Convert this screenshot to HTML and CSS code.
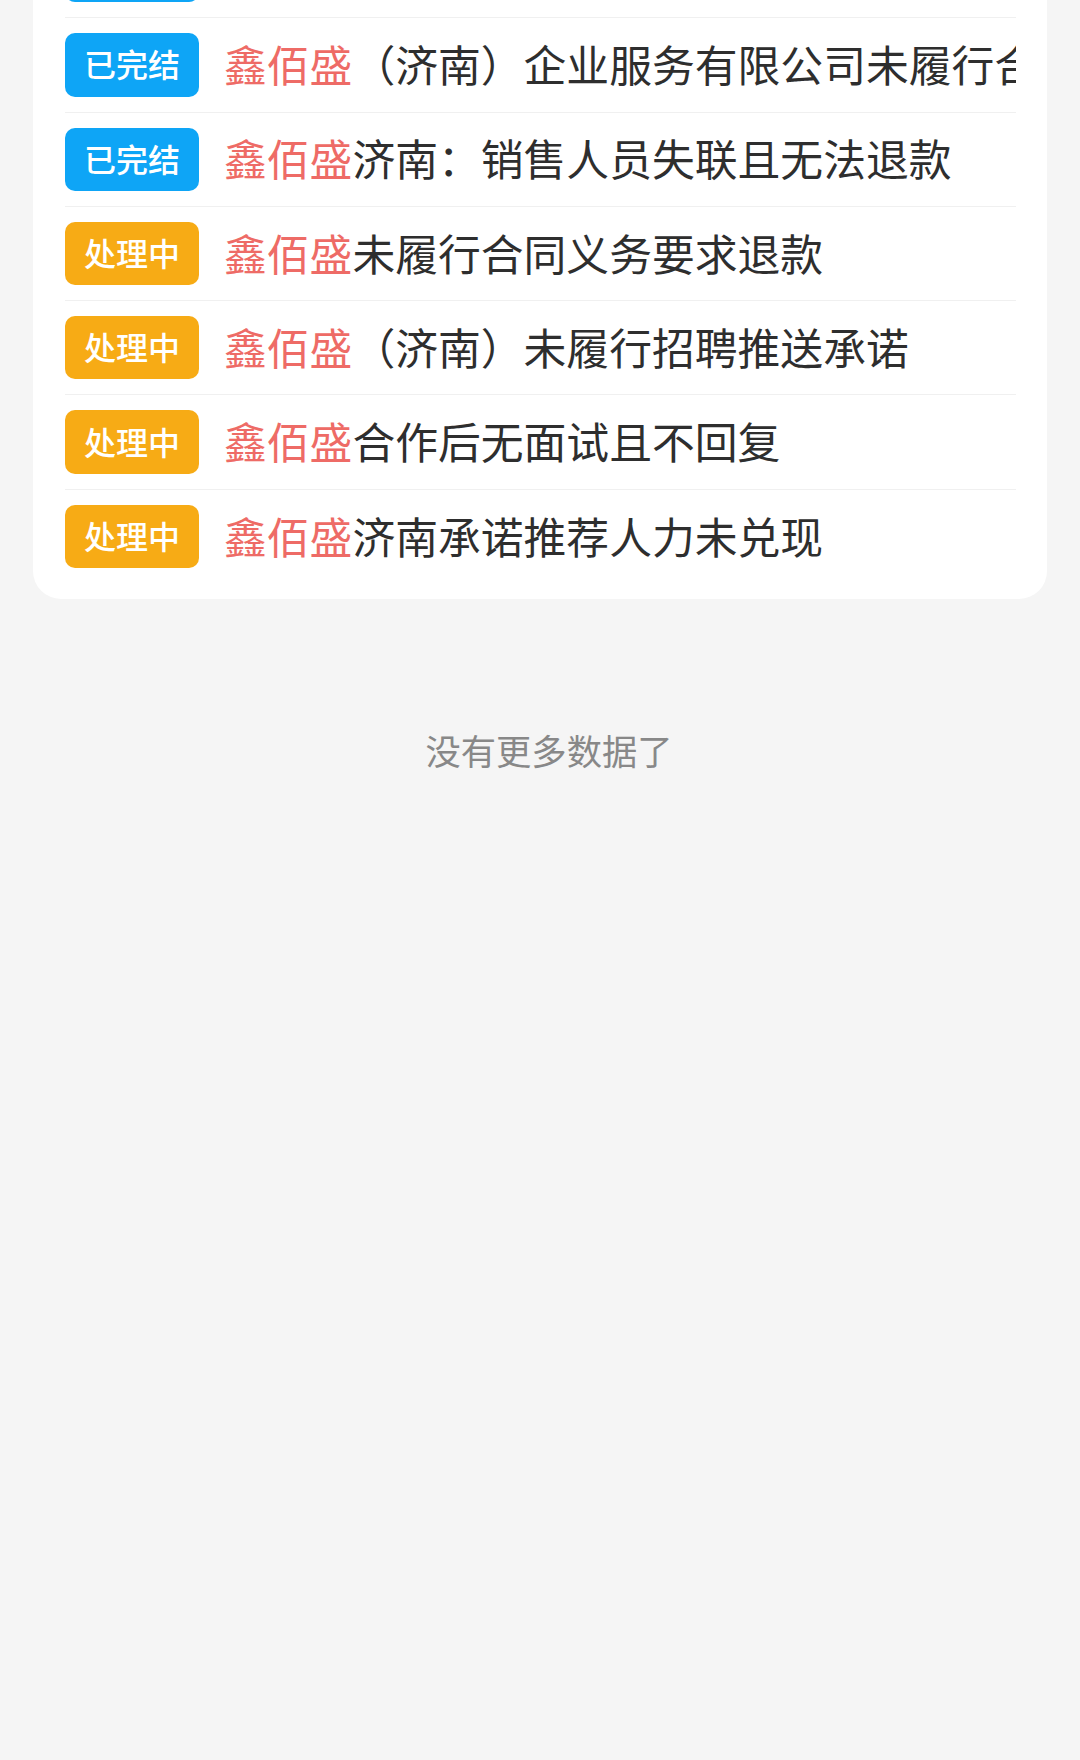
FILE: index.html
```html
<!DOCTYPE html>
<html lang="zh-CN">
<head>
<meta charset="utf-8">
<title>投诉列表</title>
<link rel="stylesheet" href="styles.css">
</head>
<body>
<div class="page">
  <div class="card">
    <div class="row">
      <span class="badge badge-done">已完结</span>
      <span class="title"><span class="brand">鑫佰盛</span>承诺服务未兑现要求退款</span>
    </div>
    <div class="row">
      <span class="badge badge-done">已完结</span>
      <span class="title"><span class="brand">鑫佰盛</span>（济南）企业服务有限公司未履行合同义务</span>
    </div>
    <div class="row">
      <span class="badge badge-done">已完结</span>
      <span class="title"><span class="brand">鑫佰盛</span>济南：销售人员失联且无法退款</span>
    </div>
    <div class="row">
      <span class="badge badge-doing">处理中</span>
      <span class="title"><span class="brand">鑫佰盛</span>未履行合同义务要求退款</span>
    </div>
    <div class="row">
      <span class="badge badge-doing">处理中</span>
      <span class="title"><span class="brand">鑫佰盛</span>（济南）未履行招聘推送承诺</span>
    </div>
    <div class="row">
      <span class="badge badge-doing">处理中</span>
      <span class="title"><span class="brand">鑫佰盛</span>合作后无面试且不回复</span>
    </div>
    <div class="row">
      <span class="badge badge-doing">处理中</span>
      <span class="title"><span class="brand">鑫佰盛</span>济南承诺推荐人力未兑现</span>
    </div>
  </div>
  <div class="no-more">没有更多数据了</div>
</div>
</body>
</html>
```

FILE: styles.css
```css
html, body {
  margin: 0;
  padding: 0;
}

body {
  background: #f5f5f5;
  font-family: "Noto Sans CJK SC", "Noto Sans", sans-serif;
  height: 1760px;
  overflow: hidden;
}

.page {
  padding: 0 33px;
}

.card {
  background: #ffffff;
  border-radius: 28px;
  margin-top: -91px;
  padding: 15px 31px 15.6px 32px;
}

.row {
  display: flex;
  align-items: center;
  gap: 25px;
  padding: 15px 0;
  border-bottom: 1px solid #f0f0f0;
}

.row:last-child {
  border-bottom: none;
}

.badge {
  flex: none;
  box-sizing: border-box;
  width: 134px;
  height: 63.3px;
  padding-bottom: 3px;
  border-radius: 10px;
  color: #ffffff;
  font-size: 32px;
  font-weight: 500;
  display: flex;
  align-items: center;
  justify-content: center;
  line-height: 1;
}

.badge-done {
  background: #0ea5f6;
}

.badge-doing {
  background: #f7ab15;
}

.title {
  flex: 1;
  min-width: 0;
  padding-bottom: 3px;
  font-size: 42.8px;
  line-height: 1;
  color: #2e2e2e;
  white-space: nowrap;
  overflow: hidden;
}

.brand {
  color: #ee6b66;
}

.no-more {
  padding-top: 133px;
  padding-left: 18px;
  text-align: center;
  font-size: 35.3px;
  line-height: 35px;
  color: #888888;
}
```
